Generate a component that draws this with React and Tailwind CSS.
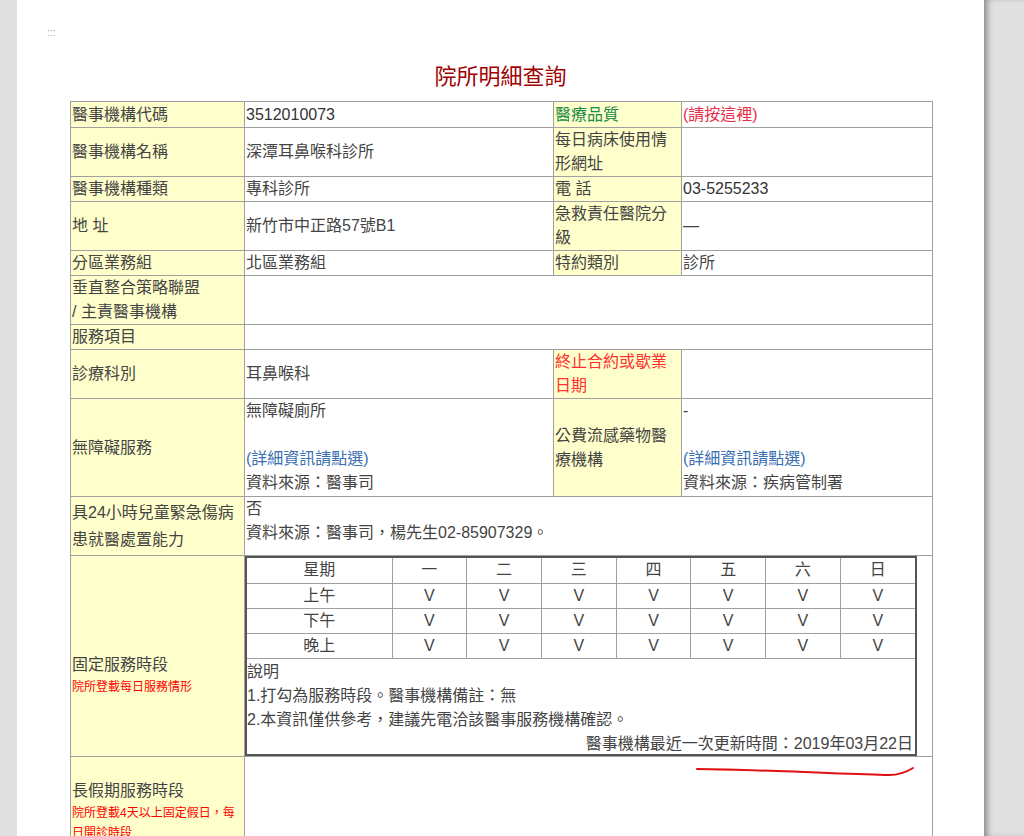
import React from "react";

const L = "bg-[#ffffcc] border border-[#a0a0a0] px-[1px] align-middle";
const V = "border border-[#a0a0a0] px-[1px] align-middle";

const App = () => {
  const days = ["一", "二", "三", "四", "五", "六", "日"];
  const rows = ["上午", "下午", "晚上"];
  return (
    <div
      className="flex w-[1024px] h-[836px] overflow-hidden bg-[#e0e0e0] text-[16px] text-[#444]"
      style={{ fontFamily: '"Liberation Sans", "Noto Sans CJK TC", sans-serif' }}
    >
      <div className="w-[17px] shrink-0" />
      <div className="relative w-[967px] shrink-0 bg-white">
        <div className="pl-[30px] pt-[28px] text-[10px] leading-[10px] text-[#9ab]">:::</div>
        <h1 className="text-center text-[22px] leading-[30px] mt-[24px] mb-[9px] text-[#a00000]">
          院所明細查詢
        </h1>
        <table className="ml-[53px] w-[862px] table-fixed border-collapse leading-[24px]">
          <colgroup>
            <col className="w-[174px]" />
            <col className="w-[309px]" />
            <col className="w-[128px]" />
            <col className="w-[251px]" />
          </colgroup>
          <tbody>
            <tr className="h-[26px]">
              <td className={L}>醫事機構代碼</td>
              <td className={V + " text-[#333]"}>3512010073</td>
              <td className={L + " text-[#1a8a4a]"}>醫療品質</td>
              <td className={V + " text-[#e8304a]"}>(請按這裡)</td>
            </tr>
            <tr className="h-[49px]">
              <td className={L}>醫事機構名稱</td>
              <td className={V}>深潭耳鼻喉科診所</td>
              <td className={L}>每日病床使用情形網址</td>
              <td className={V}></td>
            </tr>
            <tr className="h-[25px]">
              <td className={L}>醫事機構種類</td>
              <td className={V}>專科診所</td>
              <td className={L}>電 話</td>
              <td className={V + " text-[#333]"}>03-5255233</td>
            </tr>
            <tr className="h-[49px]">
              <td className={L}>地 址</td>
              <td className={V}>新竹市中正路57號B1</td>
              <td className={L}>急救責任醫院分級</td>
              <td className={V}>—</td>
            </tr>
            <tr className="h-[25px]">
              <td className={L}>分區業務組</td>
              <td className={V}>北區業務組</td>
              <td className={L}>特約類別</td>
              <td className={V}>診所</td>
            </tr>
            <tr className="h-[49px]">
              <td className={L}>垂直整合策略聯盟<br />/ 主責醫事機構</td>
              <td className={V} colSpan={3}></td>
            </tr>
            <tr className="h-[25px]">
              <td className={L}>服務項目</td>
              <td className={V} colSpan={3}></td>
            </tr>
            <tr className="h-[49px]">
              <td className={L}>診療科別</td>
              <td className={V}>耳鼻喉科</td>
              <td className={L + " text-[#ff3030]"}>終止合約或歇業日期</td>
              <td className={V}></td>
            </tr>
            <tr className="h-[98px]">
              <td className={L}>無障礙服務</td>
              <td className={V + " align-top"}>
                無障礙廁所<br /><br />
                <span className="text-[#3a6fb0]">(詳細資訊請點選)</span><br />
                資料來源：醫事司
              </td>
              <td className={L}>公費流感藥物醫療機構</td>
              <td className={V + " align-top"}>
                -<br /><br />
                <span className="text-[#3a6fb0]">(詳細資訊請點選)</span><br />
                資料來源：疾病管制署
              </td>
            </tr>
            <tr className="h-[59px]">
              <td className={L + " leading-[27px]"}>具24小時兒童緊急傷病患就醫處置能力</td>
              <td className={V + " align-top"} colSpan={3}>
                否<br />資料來源：醫事司，楊先生02-85907329。
              </td>
            </tr>
            <tr className="h-[200px]">
              <td className={L}>
                <div className="mt-[38px]">固定服務時段</div>
                <div className="text-[12px] leading-[20px] text-[#ff0000]">院所登載每日服務情形</div>
              </td>
              <td className="border border-[#a0a0a0] p-0 align-top" colSpan={3}>
                <div className="w-[672px] border-2 border-[#555] h-[200px]">
                  <table className="w-full table-fixed border-collapse text-center leading-[24px]">
                    <colgroup>
                      <col className="w-[145px]" />
                      {days.map((d) => <col key={d} />)}
                    </colgroup>
                    <tbody>
                      <tr className="h-[25px]">
                        <td className="border-b border-r border-[#a0a0a0]">星期</td>
                        {days.map((d) => <td key={d} className="border-b border-r border-[#a0a0a0] last:border-r-0">{d}</td>)}
                      </tr>
                      {rows.map((r) => (
                        <tr key={r} className="h-[25px]">
                          <td className="border-b border-r border-[#a0a0a0]">{r}</td>
                          {days.map((d) => <td key={d} className="border-b border-r border-[#a0a0a0] last:border-r-0">V</td>)}
                        </tr>
                      ))}
                    </tbody>
                  </table>
                  <div className="leading-[24px] pt-[1px]">
                    <div>說明</div>
                    <div>1.打勾為服務時段。醫事機構備註：無</div>
                    <div>2.本資訊僅供參考，建議先電洽該醫事服務機構確認。</div>
                    <div className="text-right pr-[2px]">醫事機構最近一次更新時間：2019年03月22日</div>
                  </div>
                </div>
              </td>
            </tr>
            <tr className="h-[100px]">
              <td className={L + " align-top"}>
                <div className="mt-[22px]">長假期服務時段</div>
                <div className="text-[12px] leading-[20px] text-[#ff0000]">院所登載4天以上固定假日，每日開診時段</div>
              </td>
              <td className={V} colSpan={3}></td>
            </tr>
          </tbody>
        </table>
        <svg className="absolute left-[660px] top-[760px]" width="240" height="24" viewBox="0 0 240 24">
          <path d="M20 9 C90 10 170 14 212 15 C222 15 228 13 236 8" stroke="#e01010" strokeWidth="2" fill="none" strokeLinecap="round" />
        </svg>
      </div>
      <div className="w-[40px] shrink-0 bg-[#e0e0e0] shadow-[inset_6px_0_6px_-3px_rgba(0,0,0,0.4)]" />
    </div>
  );
};

export default App;
